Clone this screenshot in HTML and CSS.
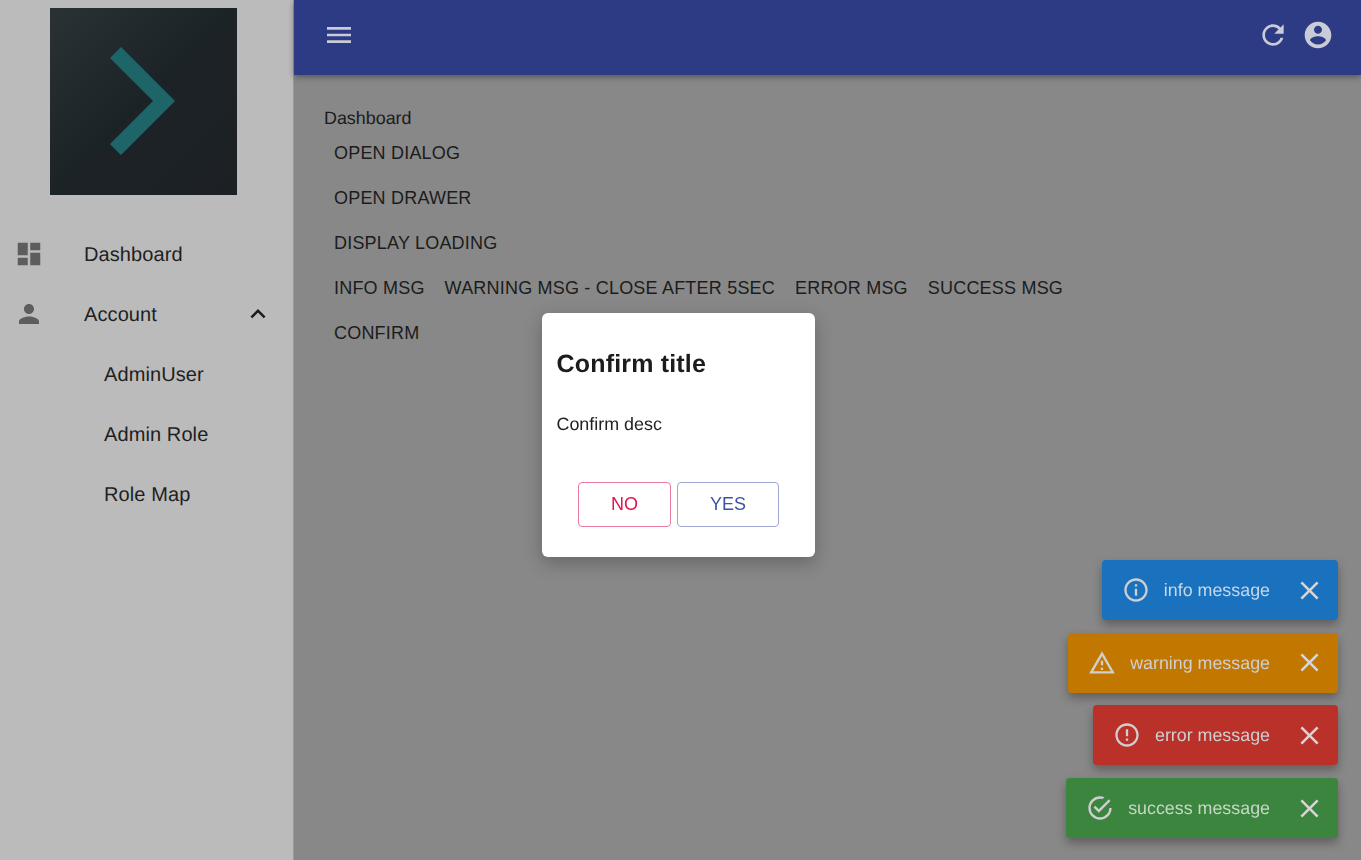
FILE: index.html
```html
<!DOCTYPE html>
<html lang="en">
<head>
<meta charset="utf-8">
<title>Dashboard</title>
<link rel="stylesheet" href="styles.css">
</head>
<body>
<div class="app">
  <aside class="sidebar">
    <div class="logo-wrap">
      <svg class="logo" viewBox="0 0 187 187" aria-hidden="true">
        <defs><linearGradient id="lg" x1="0" y1="0" x2="1" y2="1"><stop offset="0" stop-color="#2b3235"/><stop offset=".5" stop-color="#1c2327"/><stop offset="1" stop-color="#1c2024"/></linearGradient></defs>
        <rect width="187" height="187" fill="url(#lg)"/>
        <path d="M71 39 L125 93 L71 147 L60 136 L103 93 L60 50 Z" fill="#1d6569"/>
      </svg>
    </div>
    <nav class="nav">
      <a class="nav-item"><svg class="nav-icon" viewBox="0 0 24 24"><path d="M3 13h8V3H3v10zm0 8h8v-6H3v6zm10 0h8V11h-8v10zm0-18v6h8V3h-8z"/></svg><span class="nav-label">Dashboard</span></a>
      <a class="nav-item"><svg class="nav-icon" viewBox="0 0 24 24"><path d="M12 12c2.21 0 4-1.79 4-4s-1.790-4-4-4-4 1.790-4 4 1.790 4 4 4zm0 2c-2.670 0-8 1.340-8 4v2h16v-2c0-2.660-5.330-4-8-4z"/></svg><span class="nav-label">Account</span><svg class="nav-chevron" viewBox="0 0 24 24"><path d="M12 8l-6 6 1.410 1.410L12 10.830l4.590 4.580L18 14z"/></svg></a>
      <a class="nav-item nav-sub"><span class="nav-label">AdminUser</span></a>
      <a class="nav-item nav-sub"><span class="nav-label">Admin Role</span></a>
      <a class="nav-item nav-sub"><span class="nav-label">Role Map</span></a>
    </nav>
  </aside>
  <div class="main">
    <header class="appbar">
      <svg class="bar-icon" viewBox="0 0 24 24"><path d="M3 18h18v-2H3v2zm0-5h18v-2H3v2zm0-7v2h18V6H3z"/></svg>
      <div class="bar-right">
        <svg class="bar-icon" viewBox="0 0 24 24"><path d="M17.650 6.350C16.200 4.900 14.210 4 12 4c-4.420 0-7.990 3.580-7.990 8s3.570 8 7.990 8c3.730 0 6.840-2.550 7.730-6h-2.080c-.82 2.330-3.040 4-5.650 4-3.310 0-6-2.690-6-6s2.690-6 6-6c1.660 0 3.140.69 4.220 1.780L13 11h7V4l-2.350 2.350z"/></svg>
        <svg class="bar-icon" viewBox="0 0 24 24"><path d="M12 2C6.480 2 2 6.480 2 12s4.480 10 10 10 10-4.480 10-10S17.520 2 12 2zm0 3c1.660 0 3 1.340 3 3s-1.340 3-3 3-3-1.340-3-3 1.340-3 3-3zm0 14.200c-2.500 0-4.710-1.280-6-3.220.03-1.990 4-3.080 6-3.080 1.990 0 5.970 1.090 6 3.080-1.290 1.940-3.500 3.220-6 3.220z"/></svg>
      </div>
    </header>
    <main class="content">
      <div class="crumb">Dashboard</div>
      <div class="row"><button class="text-btn">OPEN DIALOG</button></div>
      <div class="row"><button class="text-btn">OPEN DRAWER</button></div>
      <div class="row"><button class="text-btn">DISPLAY LOADING</button></div>
      <div class="row">
        <button class="text-btn">INFO MSG</button>
        <button class="text-btn">WARNING MSG - CLOSE AFTER 5SEC</button>
        <button class="text-btn">ERROR MSG</button>
        <button class="text-btn">SUCCESS MSG</button>
      </div>
      <div class="row"><button class="text-btn">CONFIRM</button></div>
    </main>
  </div>
</div>

<div class="dialog-layer">
  <div class="dialog">
    <h2 class="dialog-title">Confirm title</h2>
    <p class="dialog-desc">Confirm desc</p>
    <div class="dialog-actions">
      <button class="outline-btn outline-no">NO</button>
      <button class="outline-btn outline-yes">YES</button>
    </div>
  </div>
</div>

<div class="toasts">
  <div class="toast toast-info">
    <svg class="toast-icon" viewBox="0 0 24 24"><path d="M11 7h2v2h-2zm0 4h2v6h-2zm1-9C6.480 2 2 6.480 2 12s4.480 10 10 10 10-4.480 10-10S17.520 2 12 2zm0 18c-4.410 0-8-3.590-8-8s3.590-8 8-8 8 3.590 8 8-3.590 8-8 8z"/></svg>
    <span class="toast-text">info message</span>
    <svg class="toast-close" viewBox="0 0 24 24"><path d="M19 6.410L17.590 5 12 10.590 6.410 5 5 6.410 10.590 12 5 17.590 6.410 19 12 13.410 17.590 19 19 17.590 13.410 12z"/></svg>
  </div>
  <div class="toast toast-warning">
    <svg class="toast-icon" viewBox="0 0 24 24"><path d="M12 5.990L19.530 19H4.470L12 5.990M12 2L1 21h22L12 2zm1 14h-2v2h2v-2zm0-6h-2v4h2v-4z"/></svg>
    <span class="toast-text">warning message</span>
    <svg class="toast-close" viewBox="0 0 24 24"><path d="M19 6.410L17.590 5 12 10.590 6.410 5 5 6.410 10.590 12 5 17.590 6.410 19 12 13.410 17.590 19 19 17.590 13.410 12z"/></svg>
  </div>
  <div class="toast toast-error">
    <svg class="toast-icon" viewBox="0 0 24 24"><path d="M11 15h2v2h-2zm0-8h2v6h-2zm.990-5C6.470 2 2 6.480 2 12s4.470 10 9.990 10C17.520 22 22 17.520 22 12S17.520 2 11.990 2zM12 20c-4.420 0-8-3.580-8-8s3.580-8 8-8 8 3.580 8 8-3.580 8-8 8z"/></svg>
    <span class="toast-text">error message</span>
    <svg class="toast-close" viewBox="0 0 24 24"><path d="M19 6.410L17.590 5 12 10.590 6.410 5 5 6.410 10.590 12 5 17.590 6.410 19 12 13.410 17.590 19 19 17.590 13.410 12z"/></svg>
  </div>
  <div class="toast toast-success">
    <svg class="toast-icon" viewBox="0 0 24 24"><path d="M20 12a8 8 0 0 1-8 8 8 8 0 0 1-8-8 8 8 0 0 1 8-8c.76 0 1.500.11 2.200.31l1.570-1.570A9.800 9.800 0 0 0 12 2 10 10 0 0 0 2 12a10 10 0 0 0 10 10 10 10 0 0 0 10-10M7.910 10.080L6.500 11.500 11 16 21 6l-1.410-1.420L11 13.170l-3.090-3.090z"/></svg>
    <span class="toast-text">success message</span>
    <svg class="toast-close" viewBox="0 0 24 24"><path d="M19 6.410L17.590 5 12 10.590 6.410 5 5 6.410 10.590 12 5 17.590 6.410 19 12 13.410 17.590 19 19 17.590 13.410 12z"/></svg>
  </div>
</div>
</body>
</html>
```
FILE: styles.css
```css
* { box-sizing: border-box; }
html, body { margin: 0; height: 100%; overflow: hidden; }
body { font-family: "Liberation Sans", Arial, sans-serif; color: #1c1c1c; background: #888; text-rendering: geometricPrecision; }

.app { display: flex; height: 860px; }

.sidebar { width: 294px; flex: none; background: #bbb; border-right: 1px solid #9a9a9a; }
.logo-wrap { padding: 8px 0 29px 50px; }
.logo { display: block; width: 187px; height: 187px; }
.nav { display: flex; flex-direction: column; }
.nav-item { display: flex; align-items: center; height: 60px; padding-left: 14px; font-size: 20px; color: #1f1f1f; }
.nav-label { padding-top: 2px; letter-spacing: .1px; }
.nav-icon { width: 30px; height: 30px; flex: none; margin-right: 40px; fill: #5d5d5d; }
.nav-chevron { width: 30px; height: 30px; margin-left: auto; margin-right: 20px; fill: #1a1a1a; }
.nav-sub { padding-left: 104px; }

.main { flex: 1; display: flex; flex-direction: column; min-width: 0; }
.appbar { height: 75px; flex: none; background: #2d3a84; display: flex; align-items: center; justify-content: space-between; padding: 0 27px 6px 29px; box-shadow: 0 2px 6px rgba(0,0,0,.38); }
.bar-right { display: flex; gap: 13px; }
.bar-icon { width: 32px; height: 32px; display: block; fill: #c9cbd6; }
.content { padding: 33px 0 0 30px; }
.crumb { font-size: 17.9px; line-height: 21px; }
.row { display: flex; height: 45px; align-items: center; padding-top: 2px; }
.text-btn { background: none; border: 0; padding: 0 10px; font: inherit; font-size: 18px; line-height: 24px; letter-spacing: .2px; color: #1c1c1c; }

.dialog-layer { position: fixed; inset: 0; display: grid; place-items: center; padding: 10px 4px 0 0; }
.dialog { width: 273px; height: 244px; background: #fff; border-radius: 6px; box-shadow: 0 6px 18px rgba(0,0,0,.25); padding: 35px 15px 0 14.5px; display: flex; flex-direction: column; }
.dialog-title { margin: 0; font-size: 25px; line-height: 32px; font-weight: 700; letter-spacing: .18px; color: #1c1c1c; }
.dialog-desc { margin: 34px 0 0; font-size: 17.9px; line-height: 20px; color: #222; }
.dialog-actions { display: flex; justify-content: center; gap: 6px; margin-top: 48px; padding-left: .5px; }
.outline-btn { height: 45px; background: #fff; border-radius: 4px; font: inherit; font-size: 18px; padding: 0; }
.outline-no { width: 93px; color: #e2144e; border: 1px solid #ea7ba1; }
.outline-yes { width: 102px; color: #3f51a5; border: 1px solid #9fa8d4; }

.toasts { position: fixed; right: 23px; bottom: 22px; display: flex; flex-direction: column; align-items: flex-end; gap: 12.6px; }
.toast { height: 60px; display: flex; align-items: center; border-radius: 4px; padding: 0 13.5px 0 20px; box-shadow: 0 5px 10px rgba(0,0,0,.3); font-size: 17.85px; color: #cfcfcf; }
.toast-icon { width: 28px; height: 28px; flex: none; margin-right: 14px; fill: #cfcfcf; }
.toast-text { white-space: nowrap; padding-top: 1px; }
.toast-close { width: 31px; height: 31px; flex: none; margin-left: 23.5px; fill: #d6d6d6; }
.toast-info { background: #1a72bf; color: #c5d7e8; }
.toast-warning { background: #c27700; }
.toast-error { background: #ba3129; }
.toast-success { background: #3b853e; color: #c8d8c8; }
```
